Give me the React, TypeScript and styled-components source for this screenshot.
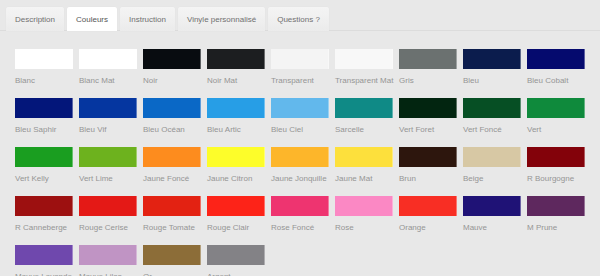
import React from "react";
import styled, { createGlobalStyle } from "styled-components";

const Global = createGlobalStyle`
  html, body { margin: 0; padding: 0; background: #e8e8e8; }
  body { font-family: "Liberation Sans", Arial, sans-serif; }
`;

const Page = styled.div`
  width: 600px;
  height: 276px;
  overflow: hidden;
  background: #e8e8e8;
  padding-top: 7px;
  box-sizing: border-box;
`;

const TabBar = styled.div`
  display: flex;
  gap: 3px;
  padding-left: 6px;
  height: 23px;
  border-bottom: 1px solid #dcdcdc;
`;

const Tab = styled.div<{ $active?: boolean }>`
  height: 24px;
  padding: 0 9px;
  display: flex;
  align-items: center;
  font-size: 8px;
  color: ${(p) => (p.$active ? "#555" : "#707070")};
  background: ${(p) =>
    p.$active ? "#ffffff" : "linear-gradient(#f4f4f4, #ebebeb)"};
  border-radius: 2px 2px 0 0;
  box-shadow: 0 0 1px rgba(0, 0, 0, 0.08);
  white-space: nowrap;
  position: relative;
  z-index: 1;
`;

const Grid = styled.div`
  display: grid;
  grid-template-columns: repeat(9, 58px);
  column-gap: 6px;
  row-gap: 12px;
  padding: 18px 0 0 15px;
`;

const Cell = styled.div`
  display: flex;
  flex-direction: column;
`;

const Swatch = styled.div<{ $c: string }>`
  height: 20px;
  background: ${(p) => p.$c};
  box-sizing: border-box;
  border-right: 1px solid rgba(255, 255, 255, 0.35);
`;

const Label = styled.div`
  margin-top: 7px;
  font-size: 8px;
  line-height: 10px;
  color: #959595;
  white-space: nowrap;
`;

const colors: [string, string][] = [
  ["Blanc", "#ffffff"],
  ["Blanc Mat", "#ffffff"],
  ["Noir", "#080c10"],
  ["Noir Mat", "#1c1e20"],
  ["Transparent", "#f4f4f4"],
  ["Transparent Mat", "#f8f8f8"],
  ["Gris", "#6b7170"],
  ["Bleu", "#0b1c4d"],
  ["Bleu Cobalt", "#050a6e"],
  ["Bleu Saphir", "#03167a"],
  ["Bleu Vif", "#0536a0"],
  ["Bleu Océan", "#0a68c6"],
  ["Bleu Artic", "#279ee6"],
  ["Bleu Ciel", "#62b8ec"],
  ["Sarcelle", "#0f8a86"],
  ["Vert Foret", "#022510"],
  ["Vert Foncé", "#064f24"],
  ["Vert", "#0f8a3c"],
  ["Vert Kelly", "#1a9e20"],
  ["Vert Lime", "#6db21e"],
  ["Jaune Foncé", "#fd8c1e"],
  ["Jaune Citron", "#fdfd2a"],
  ["Jaune Jonquille", "#fdb62a"],
  ["Jaune Mat", "#fde03c"],
  ["Brun", "#2d160d"],
  ["Beige", "#d7c8a4"],
  ["R Bourgogne", "#83020a"],
  ["R Canneberge", "#9d1010"],
  ["Rouge Cerise", "#e41916"],
  ["Rouge Tomate", "#e32212"],
  ["Rouge Clair", "#fd2318"],
  ["Rose Foncé", "#ee3470"],
  ["Rose", "#fb88c4"],
  ["Orange", "#f82e24"],
  ["Mauve", "#1f1276"],
  ["M Prune", "#5e285e"],
  ["Mauve Lavande", "#6f48ad"],
  ["Mauve Lilas", "#c094c4"],
  ["Or", "#8c6d38"],
  ["Argent", "#838286"],
];

const tabs = ["Description", "Couleurs", "Instruction", "Vinyle personnalisé", "Questions ?"];

export default function App() {
  return (
    <>
      <Global />
      <Page>
        <TabBar>
          {tabs.map((t) => (
            <Tab key={t} $active={t === "Couleurs"}>
              {t}
            </Tab>
          ))}
        </TabBar>
        <Grid>
          {colors.map(([name, c]) => (
            <Cell key={name}>
              <Swatch $c={c} />
              <Label>{name}</Label>
            </Cell>
          ))}
        </Grid>
      </Page>
    </>
  );
}
